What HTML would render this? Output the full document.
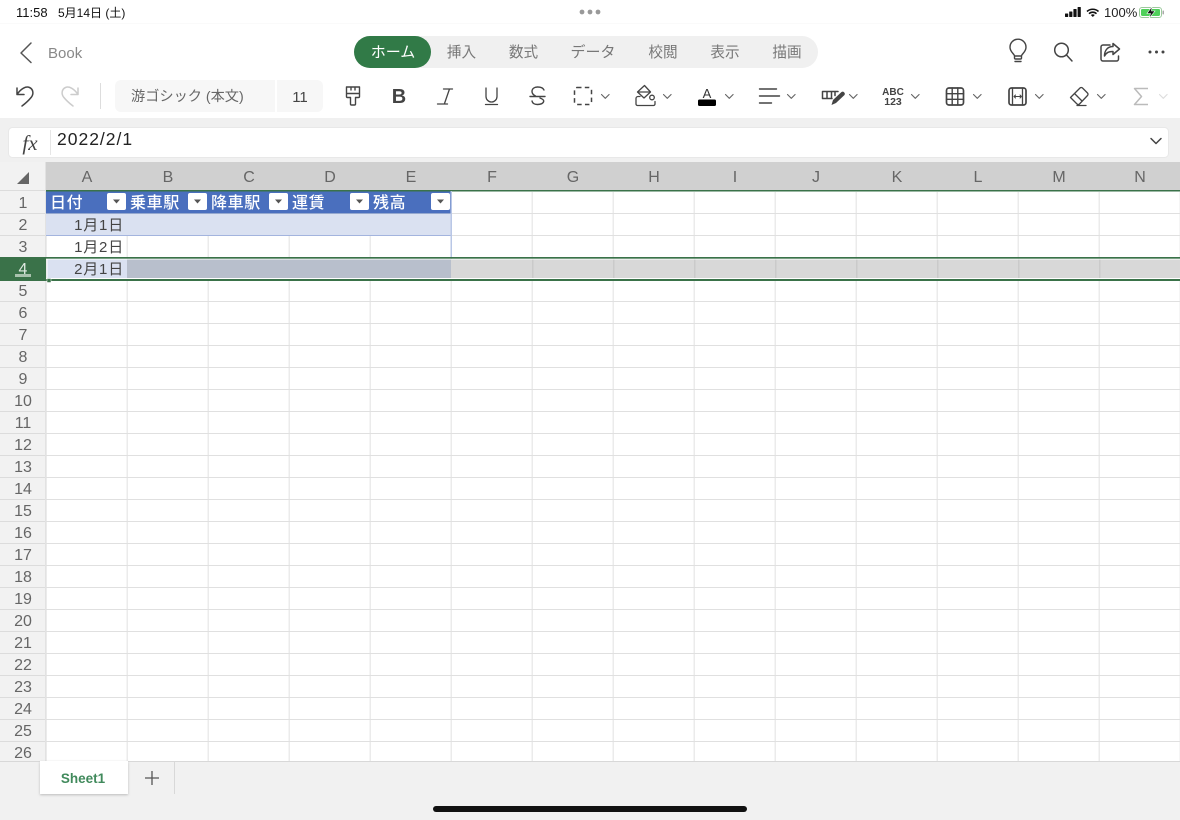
<!DOCTYPE html>
<html lang="ja"><head><meta charset="utf-8"><title>Book</title>
<style>
html,body{margin:0;padding:0;background:#fff;width:1180px;height:820px;overflow:hidden}
svg{display:block}
text{font-family:"Liberation Sans","Noto Sans CJK JP",sans-serif}
.rh text{font-size:16px;fill:#666;text-anchor:middle}
.ch text{font-size:16px;fill:#666;text-anchor:middle}
.tab text{font-size:14.6px;fill:#777;text-anchor:middle}
.th text{font-size:16px;font-weight:500;fill:#fff;letter-spacing:.6px}
.cell text{font-size:15px;fill:#444;text-anchor:end;letter-spacing:.8px}
.ic{fill:none;stroke:#444;stroke-width:1.5;stroke-linecap:round;stroke-linejoin:round}
.cv{fill:none;stroke:#666;stroke-width:1.1;stroke-linecap:round;stroke-linejoin:round}
</style></head><body>
<svg width="1180" height="820" viewBox="0 0 1180 820" xmlns="http://www.w3.org/2000/svg">
<defs>
<pattern id="g" patternUnits="userSpaceOnUse" x="46" y="192" width="81" height="22">
<rect x="80.500" y="0" width="0.500" height="22" fill="#ebebeb"/>
<rect x="0" y="0" width="1" height="22" fill="#ebebeb"/>
<rect x="0" y="21" width="81" height="1" fill="#e0e0e0"/>
</pattern>
<pattern id="r" patternUnits="userSpaceOnUse" x="0" y="192" width="46" height="22">
<rect x="0" y="21" width="46" height="1" fill="#dcdcdc"/>
</pattern>
<filter id="sh" x="-10%" y="-10%" width="120%" height="130%"><feGaussianBlur stdDeviation="1.200"/></filter>
</defs>

<rect width="1180" height="820" fill="#fff"/>
<rect x="0" y="23" width="1180" height="1" fill="#fafafa"/>
<rect x="0" y="118" width="1180" height="44" fill="#f0f0f0"/>

<!-- status bar -->
<text x="16" y="17" font-size="13" fill="#111">11:58</text>
<text x="58" y="17" font-size="12" fill="#111">5月14日 (土)</text>
<circle cx="582" cy="12" r="2.400" fill="#999"/><circle cx="590" cy="12" r="2.400" fill="#999"/><circle cx="598" cy="12" r="2.400" fill="#999"/>
<g fill="#111"><rect x="1065" y="13.500" width="3.200" height="3.500" rx=".5"/><rect x="1069.200" y="11.500" width="3.200" height="5.500" rx=".5"/><rect x="1073.400" y="9" width="3.200" height="8" rx=".5"/><rect x="1077.600" y="7" width="3.200" height="10" rx=".5"/></g>
<path d="M1087 11.500a8.500 8.500 0 0 1 11.500 0M1089 13.700a5.500 5.500 0 0 1 7.500 0" fill="none" stroke="#111" stroke-width="1.600"/><path d="M1090.800 15l2 2 2-2a3 3 0 0 0-4 0z" fill="#111"/>
<text x="1104" y="17" font-size="13" fill="#222">100%</text>
<rect x="1139.500" y="7.500" width="22" height="10" rx="2.500" fill="#fff" stroke="#9cc99c"/>
<rect x="1141" y="9" width="19" height="7" rx="1.200" fill="#4fd05a"/>
<rect x="1162.500" y="10.500" width="1.500" height="4" rx=".7" fill="#aaa"/>
<path d="M1152 6.500l-5 7h3.500l-1.500 5 6-7.500h-3.500z" fill="#111" stroke="#fff" stroke-width=".6"/>

<!-- nav -->
<path d="M31 43l-10 10 10 9.500" fill="none" stroke="#555" stroke-width="1.500" stroke-linecap="round" stroke-linejoin="round"/>
<text x="48" y="58" font-size="15" fill="#888">Book</text>
<rect x="354" y="36" width="464" height="32" rx="16" fill="#f0f0f0"/>
<rect x="354" y="36" width="77" height="32" rx="16" fill="#317a47"/>
<g class="tab">
<text x="393" y="57" style="fill:#fff;font-size:15px">ホーム</text>
<text x="461.500" y="57">挿入</text>
<text x="523.500" y="57">数式</text>
<text x="593" y="57" style="font-size:15px">データ</text>
<text x="663" y="57">校閲</text>
<text x="725" y="57">表示</text>
<text x="787" y="57">描画</text>
</g>
<!-- top right -->
<g class="ic" stroke-width="1.400">
<path d="M1015 61.500h6M1014.500 58v-2c0-2-4.500-4-4.500-8.800a8 8 0 0 1 16 0c0 4.800-4.500 6.800-4.500 8.800v2a1 1 0 0 1-1 1h-5a1 1 0 0 1-1-1zM1014.500 56h7" style="stroke-width:1.400"/>
<circle cx="1061.500" cy="50" r="6.800"/><path d="M1066.500 55l5.500 6"/>
<path d="M1110 45h-7a2 2 0 0 0-2 2v12a2 2 0 0 0 2 2h13.500a2 2 0 0 0 2-2v-3"/>
<path d="M1113 43.500l6.500 5.500-6.500 5.500v-3c-4.500 0-6.500 1-8.500 4.500 0-5.500 3-9.500 8.500-9.500z"/>
</g>
<circle cx="1150" cy="52" r="1.500" fill="#444"/><circle cx="1156.500" cy="52" r="1.500" fill="#444"/><circle cx="1163" cy="52" r="1.500" fill="#444"/>

<!-- toolbar -->
<g class="ic">
<path d="M17 88v6.500h7M17 94.500c4-6 9-8.500 12.500-7 3.500 1.500 4.500 6 2 9.500-2 2.500-5.500 6-9.500 9"/>
</g>
<g class="ic" style="stroke:#ccc">
<path d="M78 88v6.500h-7M78 94.500c-4-6-9-8.500-12.500-7-3.500 1.500-4.500 6-2 9.500 2 2.500 5.500 6 9.500 9"/>
</g>
<rect x="100" y="83" width="1" height="26" fill="#ddd"/>
<path d="M121 80h154v32h-154a6 6 0 0 1-6-6v-20a6 6 0 0 1 6-6z" fill="#f7f7f7"/>
<path d="M277 80h40a6 6 0 0 1 6 6v20a6 6 0 0 1-6 6h-40z" fill="#f7f7f7"/>
<text x="131" y="101" font-size="14.200" fill="#666">游ゴシック (本文)</text>
<text x="300" y="102" font-size="15" fill="#444" text-anchor="middle">11</text>

<g class="ic">
<!-- paint brush -->
<path d="M346.500 87h13v9.500a1 1 0 0 1-1 1h-3v6.500a1 1 0 0 1-1 1h-3a1 1 0 0 1-1-1v-6.500h-3a1 1 0 0 1-1-1zM346.500 93.500h13M351 87v3M355 87v3" stroke-width="1.400"/>
<!-- italic -->
<path d="M443.500 89h9M449.500 89l-5 14.500M437.500 104h10" stroke-width="1.300"/>
<!-- underline -->
<path d="M486 88v8.500a5.500 5.500 0 0 0 11 0v-8.500M485.500 104.500h12" stroke-width="1.300"/>
<!-- strike -->
<path d="M544 90c-1-2.500-3.500-3-6.500-3-3 0-5.500 1.500-5.500 4.500 0 2 1.500 3.500 3.500 4.500M530 96.500h15M540 98c2.500 1 3.700 2 3.700 3 0 2.500-3.200 3.500-6.200 3.500-2.500 0-5-1-5.500-3.500" stroke-width="1.400"/>
<!-- border -->
<rect x="574.500" y="87.500" width="17" height="17" rx="2.500" stroke-dasharray="4.500 3.300" stroke-width="1.500" stroke-linecap="butt"/>
<!-- fill -->
<path d="M644.500 85.500l-7 6.500 6.500 6 6.500-6z" stroke-width="1.300"/><path d="M638 92h12" stroke-width="1.300"/>
<path d="M640 96.500h-2a2 2 0 0 0-2 2v5.500a1.500 1.500 0 0 0 1.500 1.500h16a1.500 1.500 0 0 0 1.500-1.500v-2.500" stroke-width="1.300"/>
<circle cx="652" cy="97.500" r="2.300" stroke-width="1.300"/>
<!-- align -->
<path d="M759.500 89h17M759.500 96h20M759.500 103h12" stroke-width="1.400"/>
<!-- conditional -->
<path d="M838 91.500h-15.500v7h9.500M827 91.500v7M831.500 91.500v7M835 91.500v4" stroke-width="1.500"/>
<!-- table -->
<rect x="946.500" y="88" width="17" height="17" rx="2.500" stroke-width="1.700"/><path d="M952.200 88v17M957.800 88v17M946.500 93.700h17M946.500 99.300h17" stroke-width="1.400"/>
<!-- col -->
<rect x="1009" y="88" width="17" height="17" rx="2.500" stroke-width="1.700"/><path d="M1012.500 88v17M1022.500 88v17" stroke-width="1.300"/><path d="M1014 96.500h7.500M1015.500 95l-1.500 1.500 1.500 1.500M1020 95l1.500 1.500-1.500 1.500" stroke-width="1"/>
<!-- eraser -->
<path d="M1070.500 97.500l9.500-9.500a1.800 1.800 0 0 1 2.500 0l5 5a1.800 1.800 0 0 1 0 2.500l-8 8.500a1.800 1.800 0 0 1-2.500 0zM1074.500 93.500l7.500 7.500M1077 105.500h9" stroke-width="1.300"/>
</g>
<text x="399" y="103" font-size="20" font-weight="700" fill="#444" text-anchor="middle">B</text>
<text x="707" y="98" font-size="13" fill="#333" text-anchor="middle">A</text>
<rect x="698" y="99.500" width="18" height="6.500" rx="1.500" fill="#000"/>
<path d="M831.500 105l1.500-5 8.500-8a2.200 2.200 0 0 1 3 3l-8.500 8z" fill="#444"/>
<text x="893" y="95" font-size="10" font-weight="700" fill="#444" text-anchor="middle">ABC</text>
<text x="893" y="105" font-size="10.500" font-weight="700" fill="#444" text-anchor="middle">123</text>
<path d="M1148 88.500h-13.500l7 8-7 8h13.500" fill="none" stroke="#bbb" stroke-width="1.500" stroke-linejoin="round"/>
<g class="cv">
<path d="M601.500 94.500l3.800 3.800 3.800-3.800"/>
<path d="M663.500 94.500l3.800 3.800 3.800-3.800"/>
<path d="M725.500 94.500l3.800 3.800 3.800-3.800"/>
<path d="M787.500 94.500l3.800 3.800 3.800-3.800"/>
<path d="M849.500 94.500l3.800 3.800 3.800-3.800"/>
<path d="M911.500 94.500l3.800 3.800 3.800-3.800"/>
<path d="M973.500 94.500l3.800 3.800 3.800-3.800"/>
<path d="M1035.500 94.500l3.800 3.800 3.800-3.800"/>
<path d="M1097.500 94.500l3.800 3.800 3.800-3.800"/>
<path d="M1159.500 94.500l3.800 3.800 3.800-3.800" style="stroke:#ddd"/>
</g>

<!-- formula bar -->
<rect x="8.500" y="127.500" width="1160" height="30" rx="4" fill="#fff" stroke="#e8e8e8"/>
<rect x="50" y="130" width="1" height="25" fill="#e6e6e6"/>
<text x="30" y="150" font-size="21" font-style="italic" fill="#444" text-anchor="middle" style='font-family:"Liberation Serif",serif'>fx</text>
<text x="57" y="145" font-size="17.500" letter-spacing="1" fill="#222">2022/2/1</text>
<path d="M1151 138.500l5 5 5-5" fill="none" stroke="#444" stroke-width="1.500" stroke-linecap="round" stroke-linejoin="round"/>

<!-- sheet headers -->
<rect x="0" y="162" width="46" height="600" fill="#f2f2f2"/>
<rect x="46" y="162" width="1134" height="28" fill="#d0d0d0"/>
<rect x="0" y="190" width="46" height="1" fill="#dcdcdc"/>
<path d="M29 172v12h-12z" fill="#666"/>
<rect x="0" y="192" width="46" height="570" fill="url(#r)"/>
<rect x="45" y="162" width="1" height="600" fill="#e2e2e2"/>
<g class="ch">
<text x="87" y="182">A</text><text x="168" y="182">B</text><text x="249" y="182">C</text><text x="330" y="182">D</text><text x="411" y="182">E</text><text x="492" y="182">F</text><text x="573" y="182">G</text><text x="654" y="182">H</text><text x="735" y="182">I</text><text x="816" y="182">J</text><text x="897" y="182">K</text><text x="978" y="182">L</text><text x="1059" y="182">M</text><text x="1140" y="182">N</text>
</g>

<!-- grid -->
<rect x="46" y="192" width="1134" height="570" fill="url(#g)"/>
<rect x="46" y="190" width="1134" height="1.500" fill="#3a7249"/>

<!-- table -->
<rect x="46" y="191.500" width="405" height="22" fill="#4a6fbe"/>
<rect x="46" y="214" width="405" height="21" fill="#dae1f1"/>
<rect x="46" y="235" width="405" height="1" fill="#a3b4de"/>
<rect x="450.500" y="191" width="1.500" height="68" fill="#b9c7e6"/>
<g fill="#fff">
<rect x="107" y="193" width="19" height="17" rx="2"/><rect x="188" y="193" width="19" height="17" rx="2"/><rect x="269" y="193" width="19" height="17" rx="2"/><rect x="350" y="193" width="19" height="17" rx="2"/><rect x="431" y="193" width="19" height="17" rx="2"/>
</g>
<g fill="#555">
<path d="M113 199.500h7l-3.500 4z"/><path d="M194 199.500h7l-3.500 4z"/><path d="M275 199.500h7l-3.500 4z"/><path d="M356 199.500h7l-3.500 4z"/><path d="M437 199.500h7l-3.500 4z"/>
</g>
<g class="th">
<text x="50" y="208">日付</text><text x="130" y="208">乗車駅</text><text x="211" y="208">降車駅</text><text x="292" y="208">運賃</text><text x="373" y="208">残高</text>
</g>

<!-- selected row -->
<rect x="0" y="257" width="46" height="24" fill="#3a7249"/>
<rect x="46" y="257" width="1134" height="1.800" fill="#3a7249"/>
<rect x="46" y="258.800" width="1134" height="1" fill="#fff"/>
<rect x="46" y="259.500" width="1134" height="18.500" fill="#d8d8d8"/>
<rect x="47.500" y="259.500" width="79.500" height="18.500" fill="#dae1f1"/>
<rect x="127" y="259.500" width="324" height="18.500" fill="#b8bfcc"/>
<g fill="#cacaca"><rect x="532" y="259.500" width="1.500" height="18.500"/><rect x="613" y="259.500" width="1.500" height="18.500"/><rect x="694" y="259.500" width="1.500" height="18.500"/><rect x="775" y="259.500" width="1.500" height="18.500"/><rect x="856" y="259.500" width="1.500" height="18.500"/><rect x="937" y="259.500" width="1.500" height="18.500"/><rect x="1018" y="259.500" width="1.500" height="18.500"/><rect x="1099" y="259.500" width="1.500" height="18.500"/></g>
<rect x="46" y="278" width="1134" height="1" fill="#fff"/>
<rect x="46" y="279" width="1134" height="2" fill="#3a7249"/>
<rect x="46.500" y="259" width="1" height="20" fill="#fff"/>
<rect x="47" y="278.500" width="4" height="4" fill="#3a7249" stroke="#fff" stroke-width=".5"/>
<rect x="15" y="274" width="16" height="3" fill="#a9c2ae"/>

<g class="cell">
<text x="124" y="230">1月1日</text><text x="124" y="252">1月2日</text><text x="124" y="274">2月1日</text>
</g>

<g class="rh">
<text x="23" y="208">1</text><text x="23" y="230">2</text><text x="23" y="252">3</text><text x="23" y="274" style="fill:#dfe9e1">4</text><text x="23" y="296">5</text><text x="23" y="318">6</text><text x="23" y="340">7</text><text x="23" y="362">8</text><text x="23" y="384">9</text><text x="23" y="406">10</text><text x="23" y="428">11</text><text x="23" y="450">12</text><text x="23" y="472">13</text><text x="23" y="494">14</text><text x="23" y="516">15</text><text x="23" y="538">16</text><text x="23" y="560">17</text><text x="23" y="582">18</text><text x="23" y="604">19</text><text x="23" y="626">20</text><text x="23" y="648">21</text><text x="23" y="670">22</text><text x="23" y="692">23</text><text x="23" y="714">24</text><text x="23" y="736">25</text><text x="23" y="758">26</text>
</g>

<!-- bottom -->
<rect x="0" y="761" width="1180" height="59" fill="#f1f1f1"/>
<rect x="0" y="761" width="1180" height="1" fill="#d8d8d8"/>
<rect x="40" y="762" width="88" height="33" fill="#bbb" filter="url(#sh)"/>
<rect x="40" y="761" width="88" height="33" fill="#fff"/>
<text x="83" y="783" font-size="13.500" font-weight="700" fill="#418a5c" text-anchor="middle">Sheet1</text>
<path d="M152 771v14M145 778h14" stroke="#555" stroke-width="1.300" fill="none"/>
<rect x="174" y="762" width="1" height="32" fill="#d8d8d8"/>
<rect x="433" y="806" width="314" height="6" rx="3" fill="#111"/>
</svg>
</body></html>
